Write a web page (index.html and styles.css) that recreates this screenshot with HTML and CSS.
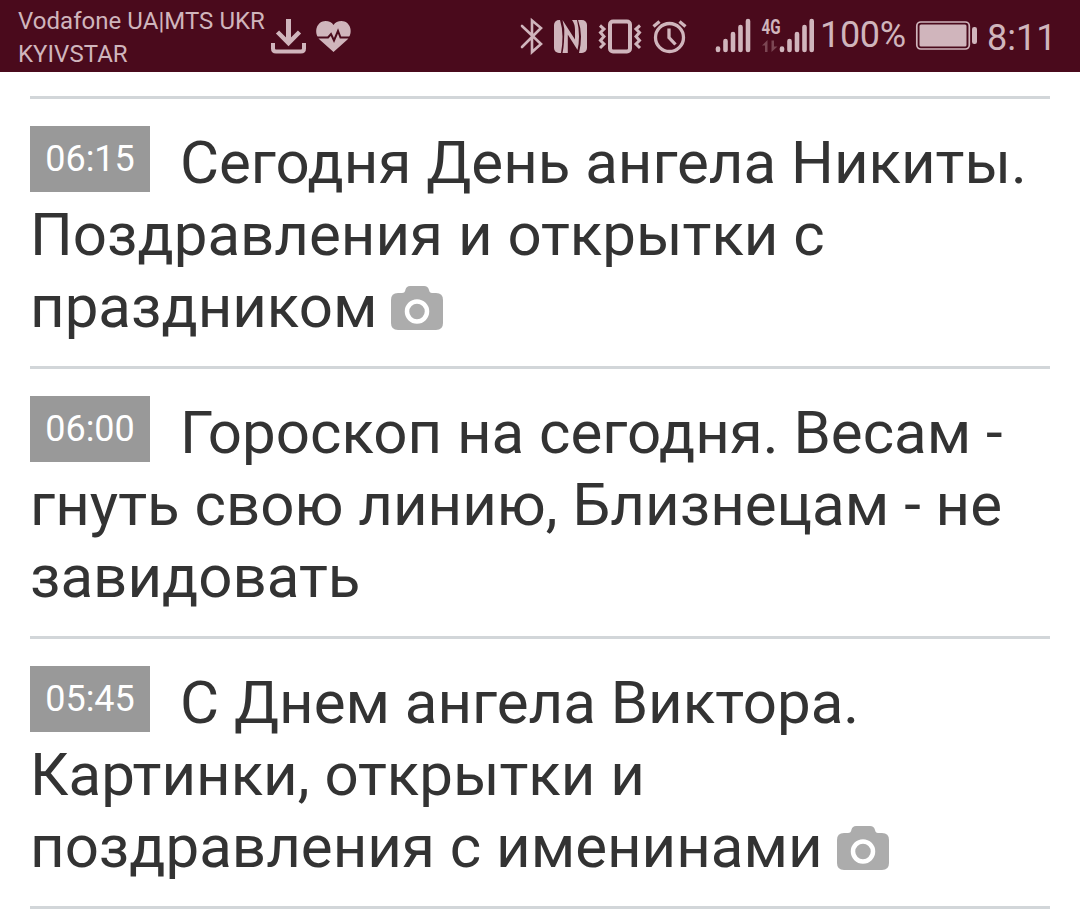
FILE: index.html
```
<!DOCTYPE html>
<html lang="ru">
<head><meta charset="utf-8"><title>Новости</title><link rel="stylesheet" href="styles.css"></head>
<body>
<header class="status">
  <div class="carrier"><span>Vodafone UA|MTS UKR</span><span>KYIVSTAR</span></div>
  <div class="icons">
    <svg width="42" height="72" viewBox="268 0 42 72"><g class="line"><path d="M288.500 19V42" stroke-width="5"/><path d="M277.500 32L288.500 43L299.500 32" stroke-width="4.500"/><path d="M273 43V48.500Q273 51.500 276 51.500H301Q304 51.500 304 48.500V43" stroke-width="4"/></g></svg>
    <svg width="50" height="72" viewBox="310 0 50 72"><path class="fill" d="M333.500 52L319.500 39.500C313 32 317 21 325.500 21C329 21 332 22.500 333.500 25C335 22.500 338 21 341.500 21C350 21 354 32 347.500 39.500Z"/><path class="cut" d="M315 37.500H328L331 34L334 40.500L338 31L340.500 37.500H352"/></svg>
  </div>
  <div class="icons system">
    <svg width="36" height="72" viewBox="514 0 36 72"><path class="line" stroke-width="2.600" d="M522 26L541 44L532 52V20.500L541 28L522 47" stroke-linecap="round"/></svg>
    <svg width="44" height="72" viewBox="550 0 44 72"><rect class="fill" x="554" y="20" width="33" height="33" rx="5"/><path class="darkfill" d="M560 20H578Q581 28 581 36.500T579 53H561Q562.500 45 562.500 36.500T560 20Z"/><path class="fill" d="M564.300 25L567.800 31V53H562.500Q564.500 45 564.300 25ZM562.500 20L575 39.500V30Q575 24 572 20H577Q579 28 579 36.500Q579 44 577.500 50L564.300 29Z"/></svg>
    <svg width="54" height="72" viewBox="594 0 54 72"><rect class="line" x="610" y="21.500" width="20" height="30" rx="3" stroke-width="4"/><path class="line" stroke-width="3" d="M600 25.500L604 29L600.500 32.500L604 36.500L600.500 40.500L604 44L600 48M640 25.500L636 29L639.500 32.500L636 36.500L639.500 40.500L636 44L640 48"/></svg>
    <svg width="62" height="72" viewBox="648 0 62 72"><circle class="line" cx="669.500" cy="37.500" r="14" stroke-width="3.300"/><path class="line" stroke-width="3.300" d="M669 28.500V37.500L675.500 44.500M653.500 26.500L659.500 21.500M679.500 21.500L685.500 26.500"/></svg>
    <svg width="48" height="72" viewBox="710 0 48 72"><path class="bars" d="M718 48.500V50M725.500 41V50M733 34V50M740.500 27V50M748 21V50"/></svg>
    <svg width="62" height="72" viewBox="758 0 62 72"><text class="network" x="761.500" y="34" textLength="19" lengthAdjust="spacingAndGlyphs">4G</text><path class="traffic" d="M762 45.500L767.500 40V52H765V45.500ZM771.500 40.500H774V46.500H777.500L771.500 52Z"/><path class="bars" d="M782 48.500V50M789.500 41V50M797 34V50M804.500 27V50M811.700 21V50"/></svg>
  </div>
  <span class="percent">100%</span>
  <svg class="battery" width="68" height="72" viewBox="912 0 68 72"><rect class="line" x="916.800" y="22" width="52.500" height="27" rx="4" stroke-width="1.700"/><rect class="fill" x="919.500" y="24.500" width="47" height="22" rx="1.500"/><rect class="fill" x="972" y="27" width="5" height="17" rx="2.200"/></svg>
  <span class="clock">8:11</span>
</header>
<main class="feed">
  <article class="item"><time class="time">06:15</time><span>Сегодня День ангела Никиты. Поздравления и открытки с праздником</span> <svg class="camera tight" viewBox="0 0 52 44"><path d="M7 7H11Q14 7 14.500 3.500Q15.500 0 19 0H33Q37 0 38 4Q38.500 7 41 7H45Q52 7 52 14V37Q52 44 45 44H7Q0 44 0 37V14Q0 7 7 7Z"/><circle cx="26" cy="25.500" r="10"/></svg></article>
  <article class="item"><time class="time">06:00</time><span>Гороскоп на сегодня. Весам - гнуть свою линию, Близнецам - не завидовать</span></article>
  <article class="item"><time class="time">05:45</time><span>С Днем ангела Виктора. Картинки, открытки и поздравления с именинами</span> <svg class="camera" viewBox="0 0 52 44"><path d="M7 7H11Q14 7 14.500 3.500Q15.500 0 19 0H33Q37 0 38 4Q38.500 7 41 7H45Q52 7 52 14V37Q52 44 45 44H7Q0 44 0 37V14Q0 7 7 7Z"/><circle cx="26" cy="25.500" r="10"/></svg></article>
</main>
</body>
</html>
```
FILE: styles.css
```
body{margin:0;background:#fff;font-family:Roboto,sans-serif;color:#333;height:909px;overflow:hidden}
.status{height:72px;background:#4a0a1c;display:flex;color:#d0b5bc}
.carrier{box-sizing:border-box;width:268px;padding:5px 0 0 18px;display:flex;flex-direction:column;font-size:24px;line-height:33px;letter-spacing:.04px;white-space:nowrap}
.icons{display:flex}
.system{margin-left:154px}
.status svg{display:block;flex:none}
.fill{fill:#d0b5bc}
.darkfill{fill:#4a0a1c}
.line{fill:none;stroke:#d0b5bc}
.cut{fill:none;stroke:#4a0a1c;stroke-width:2}
.bars{fill:none;stroke:#d0b5bc;stroke-width:4.600;stroke-linecap:round}
.traffic{fill:#7b4653}
.network{font:bold 20px Roboto,sans-serif;fill:#d0b5bc}
.percent{width:92px;font-size:36px;line-height:70px;letter-spacing:-.3px;white-space:nowrap}
.clock{margin-left:7px;font-size:36px;line-height:76px;white-space:nowrap}
.feed{padding:24px 30px 0}
.item{border-top:3px solid #d2d6d9;padding-top:28px;height:239px;font-size:60px;line-height:72px}
.item:last-child{border-bottom:3px solid #d2d6d9}
.time{float:left;width:120px;height:66px;margin:-1px 30px 0 0;background:#999;color:#fff;font-size:36px;line-height:66px;text-align:center}
.camera{display:inline-block;width:52px;height:44px;vertical-align:-3px}
.tight{margin-left:-1px}
.camera path{fill:#acacac}
.camera circle{fill:none;stroke:#fff;stroke-width:4.500}
```
